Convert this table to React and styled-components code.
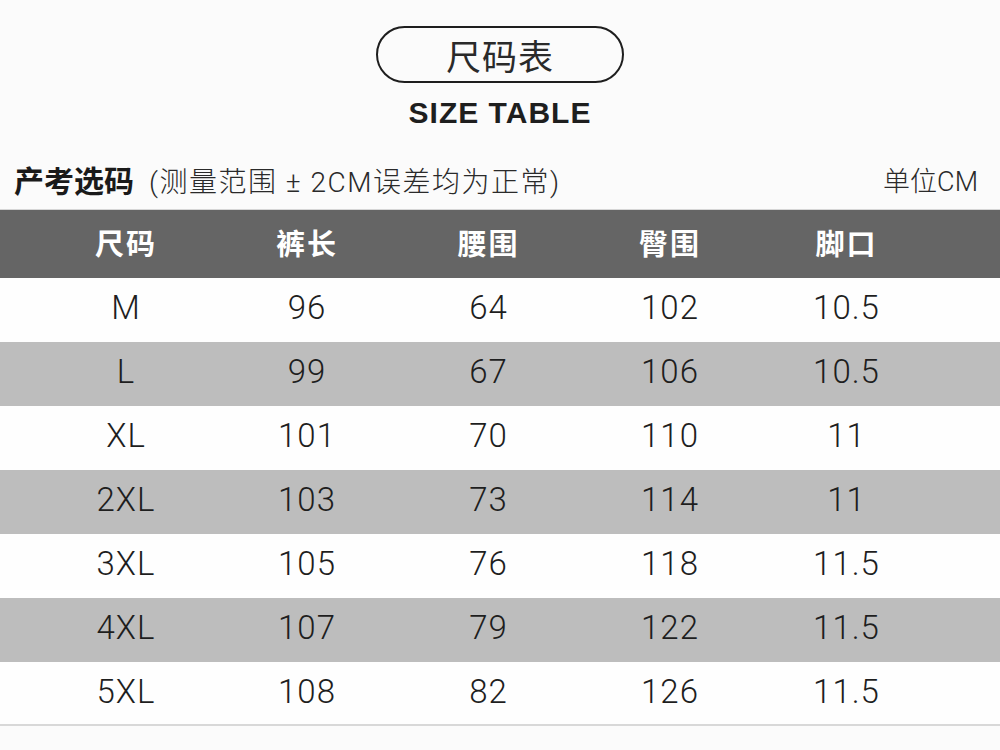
import React from "react";
import styled, { createGlobalStyle } from "styled-components";

const Global = createGlobalStyle`
  html, body { margin: 0; padding: 0; background: #fbfbfb; }
  body { font-family: "Liberation Sans", "Noto Sans CJK SC", sans-serif; color: #222; }
`;

const Page = styled.div`
  width: 1000px;
  height: 750px;
  overflow: hidden;
  display: flex;
  flex-direction: column;
  background: #fbfbfb;
`;

const TitleBlock = styled.div`
  display: flex;
  flex-direction: column;
  align-items: center;
  padding-top: 26px;
`;

const Pill = styled.div`
  width: 244px;
  height: 53px;
  border: 2px solid #1e1e1e;
  border-radius: 29px;
  display: flex;
  align-items: center;
  justify-content: center;
  font-family: "Noto Sans CJK SC", sans-serif;
  font-size: 35px;
  line-height: 1;
  font-weight: 400;
  color: #2a2a2a;
  letter-spacing: 1px;
`;

const EnTitle = styled.div`
  margin-top: 12px;
  font-family: "Liberation Sans", Arial, sans-serif;
  font-weight: 700;
  font-size: 30px;
  letter-spacing: 1px;
  color: #1e1e1e;
  line-height: 36px;
`;

const InfoRow = styled.div`
  display: flex;
  align-items: center;
  justify-content: space-between;
  height: 58px;
  margin-top: 20px;
  padding: 0 22px 2px 14px;
  box-sizing: border-box;
  height: 59px;
  border-bottom: 1px solid #d6d6d6;
`;

const InfoLeft = styled.div`
  display: flex;
  align-items: baseline;
  gap: 15px;
`;

const InfoTitle = styled.span`
  font-family: "Noto Sans CJK SC", sans-serif;
  font-weight: 700;
  font-size: 30px;
  color: #1a1a1a;
`;

const InfoNote = styled.span`
  font-family: "Roboto", "Noto Sans CJK SC", sans-serif;
  font-weight: 300;
  font-size: 28px;
  letter-spacing: 1.5px;
  color: #2a2a2a;
`;

const Unit = styled.span`
  font-family: "Roboto", "Noto Sans CJK SC", sans-serif;
  font-weight: 300;
  font-size: 27px;
  color: #2a2a2a;
`;

const Row = styled.div`
  display: grid;
  grid-template-columns: 182px 180px 183px 180px 173px;
  padding-left: 35px;
  align-items: center;
  height: ${(p) => (p.$head ? "68px" : "64px")};
  background: ${(p) => (p.$head ? "#656565" : p.$shade ? "#bdbdbd" : "#fefefe")};
`;

const HeadCell = styled.div`
  text-align: center;
  font-family: "Noto Sans CJK SC", sans-serif;
  font-weight: 700;
  font-size: 29px;
  color: #fff;
  letter-spacing: 2px;
  padding-bottom: 4px;
`;

const Cell = styled.div`
  text-align: center;
  font-family: "Roboto", "Liberation Sans", Arial, sans-serif;
  font-weight: 300;
  font-size: 33px;
  color: #1e1e1e;
  letter-spacing: 1px;
  padding-bottom: 6px;
`;

const BottomLine = styled.div`
  height: 2px;
  background: #d8d8d8;
  margin-top: -2px;
`;

const heads = ["尺码", "裤长", "腰围", "臀围", "脚口"];
const rows = [
  ["M", "96", "64", "102", "10.5"],
  ["L", "99", "67", "106", "10.5"],
  ["XL", "101", "70", "110", "11"],
  ["2XL", "103", "73", "114", "11"],
  ["3XL", "105", "76", "118", "11.5"],
  ["4XL", "107", "79", "122", "11.5"],
  ["5XL", "108", "82", "126", "11.5"],
];

export default function App() {
  return (
    <Page>
      <Global />
      <TitleBlock>
        <Pill>尺码表</Pill>
        <EnTitle>SIZE TABLE</EnTitle>
      </TitleBlock>
      <InfoRow>
        <InfoLeft>
          <InfoTitle>产考选码</InfoTitle>
          <InfoNote>(测量范围 ± 2CM误差均为正常)</InfoNote>
        </InfoLeft>
        <Unit>单位CM</Unit>
      </InfoRow>
      <Row $head>
        {heads.map((h) => (
          <HeadCell key={h}>{h}</HeadCell>
        ))}
      </Row>
      {rows.map((r, i) => (
        <Row key={r[0]} $shade={i % 2 === 1}>
          {r.map((c, j) => (
            <Cell key={j}>{c}</Cell>
          ))}
        </Row>
      ))}
      <BottomLine />
    </Page>
  );
}
